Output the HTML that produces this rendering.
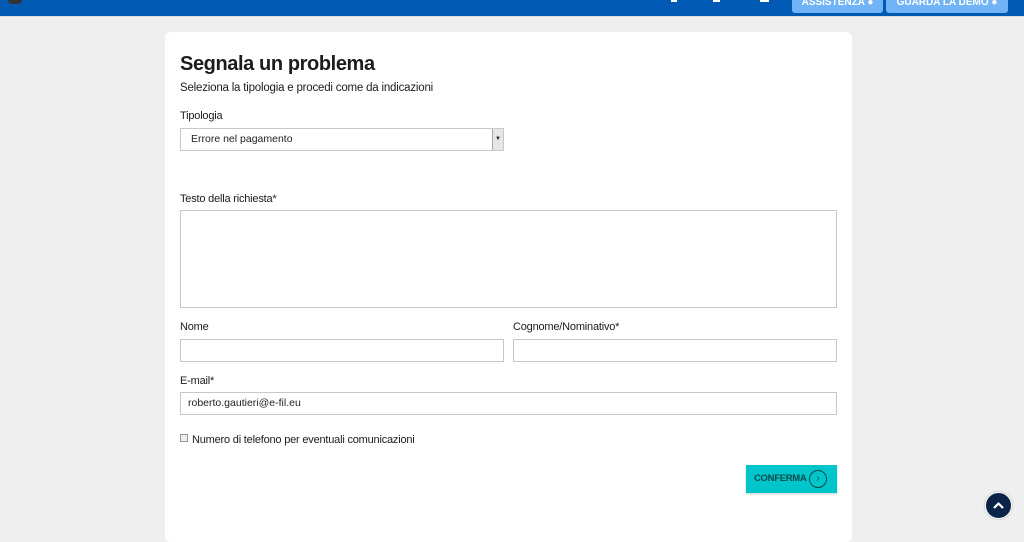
<!DOCTYPE html>
<html><head><meta charset="utf-8"><style>
*{box-sizing:border-box;margin:0;padding:0}
body{width:1024px;height:528px;overflow:hidden;background:#efefef;font-family:"Liberation Sans",sans-serif;color:#1c1c1c;position:relative}
.hdr{position:absolute;left:0;top:0;width:1024px;height:17px;background:#0059b3;border-bottom:1px solid #dcdcdc}
.btn{position:absolute;top:0;height:13px;background:#70b4f7;border-radius:0 0 3px 3px;color:#fff;font-size:10px;font-weight:bold;line-height:6px;text-align:center}
.card{position:absolute;left:165px;top:32px;width:687px;height:510px;background:#fff;border-radius:6px}
.t{position:absolute;white-space:nowrap;font-size:11px;letter-spacing:-0.2px}
.inp{position:absolute;border:1px solid #c8c8c8;background:#fff;font-size:10.5px;padding-left:7px;color:#222}
</style></head><body>
<div class="hdr"></div>
<div style="position:absolute;left:8px;top:0;width:14px;height:4px;background:#333;border-radius:0 0 6px 6px"></div>
<div style="position:absolute;left:671px;top:0;width:6px;height:2px;background:#fff"></div>
<div style="position:absolute;left:713px;top:0;width:7px;height:2px;background:#fff"></div>
<div style="position:absolute;left:760px;top:0;width:9px;height:2px;background:#fff"></div>
<div class="btn" style="left:792px;width:91px">ASSISTENZA ●</div>
<div class="btn" style="left:886px;width:122px">GUARDA LA DEMO ●</div>
<div class="card">
<div class="t" style="left:15px;top:21px;font-size:20px;font-weight:bold;letter-spacing:-0.4px">Segnala un problema</div>
<div class="t" style="left:15px;top:50px;font-size:11.5px">Seleziona la tipologia e procedi come da indicazioni</div>
<div class="t" style="left:15px;top:78px">Tipologia</div>
<div class="inp" style="left:15px;top:96px;width:324px;height:23px;line-height:21px;padding-left:10px">Errore nel pagamento
<div style="position:absolute;right:0;top:0;width:11px;height:21px;background:#e6e6e6;border-left:1px solid #aaa;font-size:6px;line-height:21px;text-align:center">▼</div></div>
<div class="t" style="left:15px;top:161px">Testo della richiesta*</div>
<div class="inp" style="left:15px;top:178px;width:657px;height:98px"></div>
<div class="t" style="left:15px;top:289px">Nome</div>
<div class="t" style="left:348px;top:289px">Cognome/Nominativo*</div>
<div class="inp" style="left:15px;top:307px;width:324px;height:23px"></div>
<div class="inp" style="left:348px;top:307px;width:324px;height:23px"></div>
<div class="t" style="left:15px;top:343px">E-mail*</div>
<div class="inp" style="left:15px;top:360px;width:657px;height:23px;line-height:21px">roberto.gautieri@e-fil.eu</div>
<div style="position:absolute;left:15px;top:402px;width:8px;height:8px;border:1px solid #999;background:#eee"></div>
<div class="t" style="left:27px;top:402px">Numero di telefono per eventuali comunicazioni</div>
<div style="position:absolute;left:581px;top:433px;width:91px;height:28px;background:#00c5ca;box-shadow:0 1px 2px rgba(0,0,0,.2)">
<div class="t" style="left:8px;top:8px;font-size:9.5px;font-weight:bold;color:#0d4a4c;letter-spacing:-0.3px">CONFERMA</div>
<div style="position:absolute;left:63px;top:5px;width:18px;height:18px;border:1.5px solid #0d4a4c;border-radius:50%;font-size:10px;line-height:15px;text-align:center;color:#0d4a4c">›</div>
</div>
</div>
<div style="position:absolute;left:985px;top:492px;width:27px;height:27px;border-radius:50%;background:#0b2347;border:1px solid #fff;box-shadow:0 0 2px rgba(0,0,0,.3)">
<svg width="25" height="25" viewBox="0 0 25 25"><path d="M8 15 L12.5 10.5 L17 15" stroke="#fff" stroke-width="2.2" fill="none"/></svg></div>
</body></html>
